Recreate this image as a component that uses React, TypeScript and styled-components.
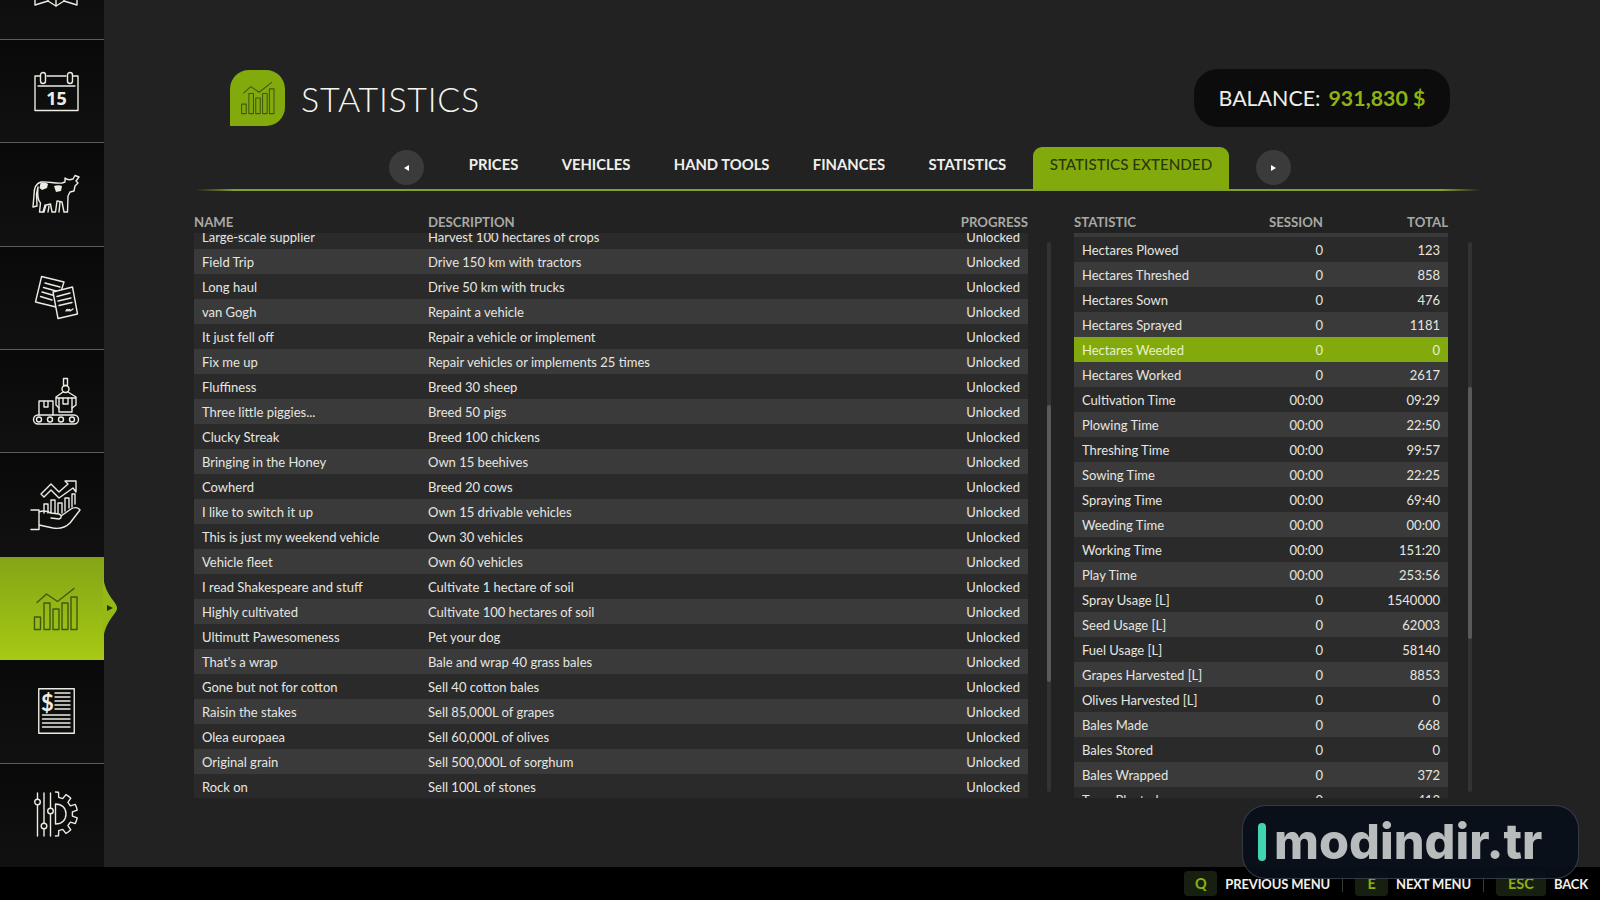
import React from 'react';
import styled, { createGlobalStyle } from 'styled-components';

const GlobalStyle = createGlobalStyle`
  html, body {
    margin: 0;
    padding: 0;
    background: #222222;
    overflow: hidden;
  }
  * {
    box-sizing: border-box;
  }
`;

const FONT = `Lato, "Noto Sans", "Liberation Sans", sans-serif`;
const GREEN = '#83aa0d';
const INK = '#ecece4';

const Page = styled.div`
  position: relative;
  width: 1600px;
  height: 900px;
  overflow: hidden;
  display: flex;
  flex-direction: column;
  background: #222222;
  font-family: ${FONT};
  color: #e6e6e0;
`;

const Body = styled.div`
  flex: 1;
  min-height: 0;
  display: flex;
`;

const Sidebar = styled.nav`
  flex: 0 0 104px;
  display: flex;
  flex-direction: column;
  justify-content: flex-end;
  background: #0d0d0d;
`;

const NavItem = styled.div<{ $active?: boolean; $plain?: boolean }>`
  position: relative;
  flex: 0 0 103.4px;
  display: flex;
  align-items: center;
  justify-content: center;
  padding-left: 8px;
  background: ${p => (p.$active ? 'linear-gradient(180deg, #84a416 0%, #a6ca14 100%)' : 'linear-gradient(180deg, #090909 0%, #111111 100%)')};
  border-bottom: ${p => (p.$active || p.$plain ? '0' : '1px solid #5c5c5c')};
`;

const Bump = styled.svg`
  position: absolute;
  left: 103px;
  top: 18px;
  width: 15px;
  height: 66px;
`;

const Main = styled.main`
  flex: 1;
  min-width: 0;
  padding-top: 69px;
  display: flex;
  flex-direction: column;
`;

const Header = styled.header`
  height: 58px;
  margin: 0 150px 0 126px;
  display: flex;
  align-items: center;
  justify-content: space-between;
`;

const TitleGroup = styled.div`
  display: flex;
  align-items: center;
  gap: 16px;
`;

const TitleBadge = styled.div`
  width: 55px;
  height: 56px;
  border-radius: 19px 19px 19px 0;
  background: ${GREEN};
  display: flex;
  align-items: center;
  justify-content: center;
`;

const Title = styled.h1`
  margin: 0;
  font-size: 34px;
  font-weight: 300;
  letter-spacing: 0.7px;
  color: #f6f6f0;
`;

const Balance = styled.div`
  width: 256px;
  height: 58px;
  border-radius: 24px;
  background: #0c0c0c;
  display: flex;
  align-items: center;
  justify-content: center;
  gap: 8px;
  font-size: 21.4px;
  color: #eeeee8;
`;

const BalanceValue = styled.span`
  font-weight: 700;
  color: #8db312;
`;

const TabBar = styled.div`
  position: relative;
  height: 44px;
  margin: 20px 120px 0 93px;
  padding-left: 3px;
  display: flex;
  justify-content: center;
  align-items: flex-start;
  border-bottom: 2px solid transparent;
  border-image: linear-gradient(90deg, #222222 0%, #84a02c 3%, #84a02c 97%, #222222 100%) 1;
`;

const RoundButton = styled.div<{ $next?: boolean }>`
  width: 35px;
  height: 35px;
  margin: 3px ${p => (p.$next ? 0 : '28px')} 0 ${p => (p.$next ? '27px' : 0)};
  border-radius: 50%;
  background: #3b3b3b;
  display: flex;
  align-items: center;
  justify-content: center;
  &::before {
    content: '';
    border-style: solid;
    border-width: 3px 0 3px 5px;
    border-color: transparent transparent transparent #ffffff;
    transform: ${p => (p.$next ? 'none' : 'rotate(180deg)')};
  }
`;

const Tab = styled.div<{ $active?: boolean }>`
  height: 42px;
  padding: 7px 17px 0;
  margin-right: ${p => (p.$active ? 0 : '9.4px')};
  border-radius: 9px 9px 0 0;
  background: ${p => (p.$active ? GREEN : 'transparent')};
  color: ${p => (p.$active ? '#2a380b' : '#f0f0ea')};
  font-size: ${p => (p.$active ? 15.2 : 14.8)}px;
  line-height: 20px;
  font-weight: ${p => (p.$active ? 500 : 700)};
  white-space: nowrap;
`;

const Tables = styled.div`
  margin: 22px 0 0 90px;
  display: flex;
  align-items: flex-start;
`;

const TableColumn = styled.section<{ $width: number; $gapLeft?: number }>`
  flex: 0 0 ${p => p.$width}px;
  margin-left: ${p => p.$gapLeft ?? 0}px;
`;

const HeadRow = styled.div<{ $stats?: boolean }>`
  height: 20px;
  padding-bottom: 3px;
  display: grid;
  grid-template-columns: ${p => (p.$stats ? '1fr 100px 125px' : '234px 1fr 120px')};
  align-items: center;
  font-size: 13.2px;
  line-height: 16px;
  font-weight: 700;
  color: #a8a8a4;
`;

const HeadCell = styled.div<{ $right?: boolean }>`
  text-align: ${p => (p.$right ? 'right' : 'left')};
`;

const ListWindow = styled.div`
  height: 565px;
  overflow: hidden;
`;

const List = styled.div<{ $offset: number }>`
  margin-top: -${p => p.$offset}px;
`;

const Row = styled.div<{ $stats?: boolean; $light?: boolean; $selected?: boolean }>`
  height: 25px;
  display: grid;
  grid-template-columns: ${p => (p.$stats ? '1fr 100px 125px' : '234px 1fr 120px')};
  align-items: center;
  padding: 0 8px 0 ${p => (p.$stats ? '8px' : '0')};
  background: ${p => (p.$selected ? GREEN : p.$light ? '#3a3a3a' : '#2a2a2a')};
  font-size: 13px;
  color: ${p => (p.$selected ? '#e9f0cf' : '#e6e6e0')};
  white-space: nowrap;
`;

const NameCell = styled.div`
  padding-left: 8px;
`;

const ValueCell = styled.div<{ $shift?: boolean }>`
  text-align: right;
  margin-right: ${p => (p.$shift ? '-8px' : 0)};
`;

const Track = styled.div<{ $gapLeft: number }>`
  flex: 0 0 4px;
  height: 550px;
  margin: 29px 0 0 ${p => p.$gapLeft}px;
  border-radius: 2px;
  background: #333333;
  display: flex;
`;

const Thumb = styled.div<{ $top: number; $height: number }>`
  width: 4px;
  height: ${p => p.$height}px;
  margin-top: ${p => p.$top}px;
  border-radius: 2px;
  background: #5a5a5a;
`;

const Footer = styled.footer`
  flex: 0 0 33px;
  background: #000000;
  display: flex;
  align-items: center;
  justify-content: flex-end;
  padding-right: 12px;
`;

const KeyCap = styled.div<{ $wide?: boolean }>`
  width: ${p => (p.$wide ? 50 : 33)}px;
  height: 25px;
  margin-right: 8px;
  border-radius: 4px;
  background: #172010;
  color: #8bb011;
  display: flex;
  align-items: center;
  justify-content: center;
  font-size: 14.5px;
  font-weight: 700;
`;

const KeyLabel = styled.span`
  font-size: 13px;
  font-weight: 700;
  letter-spacing: -0.15px;
  color: #f0f0ea;
  white-space: nowrap;
`;

const KeyDivider = styled.div`
  width: 1px;
  height: 16px;
  margin: 0 12px;
  background: #3a3a3a;
`;

const Watermark = styled.div`
  position: absolute;
  right: 21px;
  bottom: 21px;
  width: 337px;
  height: 74px;
  border-radius: 24px;
  border: 1px solid rgba(200, 220, 230, 0.22);
  background: rgba(8, 15, 25, 0.93);
  display: flex;
  align-items: center;
  padding-left: 15px;
  gap: 8px;
`;

const WatermarkBar = styled.div`
  width: 8px;
  height: 38px;
  border-radius: 4px;
  background: #40d6b2;
`;

const WatermarkText = styled.span`
  font-family: Inter, "Noto Sans", sans-serif;
  font-size: 48.5px;
  font-weight: 800;
  line-height: 1;
  color: #b9bcbd;
`;

const Icon = styled.svg`
  display: block;
  fill: none;
  stroke: currentColor;
  stroke-width: 1.4;
  stroke-linecap: round;
  stroke-linejoin: round;
  color: ${INK};
  overflow: visible;
`;

const DarkIcon = styled(Icon)`
  color: #3f5a0e;
`;

const CalendarDay = styled.text`
  font-family: "Noto Sans", sans-serif;
  font-size: 18px;
  font-weight: 700;
  fill: currentColor;
  stroke: none;
`;

const InvoiceSign = styled.text`
  font-family: ${FONT};
  font-size: 22px;
  font-weight: 700;
  fill: currentColor;
  stroke: none;
`;

const MapIcon = () => (
  <Icon width={46} height={40} viewBox="0 0 46 40">
    <path d="M2 4 L15 1 L23 5 L31 1 L44 4 V37 L31 33 L23 38 L15 33 L2 37 Z" />
    <path d="M15 1 V33 M23 5 V38 M31 1 V33" />
  </Icon>
);

const CalendarIcon = () => (
  <Icon width={45} height={39} viewBox="0 0 45 39">
    <path d="M6 4 H1 V38.5 H44 V4 H39 M13 4 H32" />
    <rect x={6.5} y={0.5} width={5} height={11} rx={2.5} />
    <rect x={33.5} y={0.5} width={5} height={11} rx={2.5} />
    <path d="M4 14 H41" />
    <CalendarDay x={22.5} y={33} textAnchor="middle">15</CalendarDay>
  </Icon>
);

const CowIcon = () => (
  <Icon width={48} height={38} viewBox="0 0 48 38">
    <path d="M33 3 C35 5 38 5 41 4 L43 0.5 L47 2 L44 6 L46 8 L43 11 L42 16 L38 17 L36 21 L35.5 37 H32 L30 27 L25 26 L23.5 37 H20 L18.5 29 L14 30 L12 37 H7.5 L8.5 28 C6 26 5.5 18 6 12 L4.5 19 L5 31 L1 32 L2 20 C2 12 5 8 9 7 C15 6 24 9 30 8 L33 7 Z" />
    <path fill="currentColor" stroke="none" d="M8.5 8 C12 7 15 8 16 9 L15 13 L10 15 L7.5 13 Z M22 11 C25 10 28 10 30 11 L29 16 L24 17 Z" />
    <path d="M11 37 L13 30 M16 37 L17 31 M27 37 L28 27" />
  </Icon>
);

const DocumentsIcon = () => (
  <Icon width={43} height={43} viewBox="0 0 43 43">
    <polygon points="6.6,0.5 29,6 21,31 0.5,26" />
    <path d="M10 7 L25 11 M8.5 11.5 L23 15.5 M7 16 L19 19.5 M5.5 20.5 L17 24" />
    <polygon points="18,16 37.5,11 42.5,38 23,42.5" fill="#0e0e0e" />
    <path d="M22 20.5 L35 17 M23 25 L36 22 M24 29.5 L37 26.5 M31 35 C32 33 33 33 33 35 C34 33 35 33 35 35 L38 33" />
  </Icon>
);

const FactoryIcon = () => (
  <Icon width={46} height={46} viewBox="0 0 46 46">
    <rect x={0.5} y={37} width={45} height={9} rx={4.5} />
    <circle cx={6} cy={41.5} r={2.5} />
    <circle cx={17} cy={41.5} r={2.5} />
    <circle cx={28} cy={41.5} r={2.5} />
    <circle cx={39} cy={41.5} r={2.5} />
    <path d="M6 37 V23 H20 V37 M11 23 V29 H15 V23" />
    <rect x={30.5} y={0.5} width={4} height={7} />
    <circle cx={32.5} cy={11} r={3.5} />
    <path d="M30 14 L23 19 V27 L26 30 M35 14 L43 19 V27 L39 30 M23 20 H43" />
    <path d="M26 20 V34 H39 V20 M30 20 V26 H35 V20" />
  </Icon>
);

const HandIcon = () => (
  <Icon width={50} height={50} viewBox="0 0 50 50">
    <path d="M10 14 L20 4 L28 12 L37 4 L34 1 H45 V12 L42 8 L28 18 L20 10 L13 17 Z" />
    <path d="M13 33 V24 H17 V33 M20 33 V20 H24 V33 M27 33 V23 H31 V33 M34 31 V18 H38 V28 M41 27 V14 H44 V24" />
    <path d="M0 30 H8 V49.5 H0 M8 32 C12 30 16 31 20 33 L28 34 C31 35 31 38 28 39 L20 38 M30 36 L40 29 C43 27 47 27 49 30 L39 43 C34 48 28 49 22 48 L8 45" />
  </Icon>
);

const BarsIcon = ({ width, height }: { width: number; height: number }) => (
  <DarkIcon width={width} height={height} viewBox="0 0 44 42">
    <rect x={0.5} y={29} width={6} height={12.5} />
    <rect x={10} y={15} width={6} height={26.5} />
    <rect x={19} y={21} width={6} height={20.5} />
    <rect x={28} y={15} width={6} height={26.5} />
    <rect x={37} y={9} width={6} height={32.5} />
    <path d="M3 14.5 L12.5 6 L23.5 13.5 L40 0.5" />
  </DarkIcon>
);

const InvoiceIcon = () => (
  <Icon width={37} height={46} viewBox="0 0 37 46">
    <rect x={0.75} y={0.75} width={35.5} height={44.5} />
    <InvoiceSign x={3} y={23}>$</InvoiceSign>
    <path d="M17 5 H32 M17 9 H32 M17 13 H32 M17 17 H32 M17 21 H32 M4.5 27 H32 M4.5 31 H32 M4.5 35 H32 M4.5 39 H32" />
  </Icon>
);

// half a cog, teeth on the right side only
const halfGear = () => {
  const cx = 21.5;
  const cy = 22;
  const outer = 22;
  const inner = 17;
  const teeth = 5;
  const points: string[] = [`M${cx} ${cy - outer}`];
  for (let i = 0; i < teeth; i++) {
    const step = 180 / teeth;
    const start = -90 + i * step;
    const angles: [number, number][] = [
      [start + step * 0.22, outer],
      [start + step * 0.3, inner],
      [start + step * 0.7, inner],
      [start + step * 0.78, outer],
    ];
    const seq: [number, number][] = i === 0 ? angles : [[start + step * 0.02, outer], ...angles];
    seq.forEach(([a, r]) => {
      const rad = (a * Math.PI) / 180;
      points.push(`L${(cx + r * Math.cos(rad)).toFixed(1)} ${(cy + r * Math.sin(rad)).toFixed(1)}`);
    });
  }
  points.push(`L${cx} ${cy + outer}`);
  return points.join(' ');
};

const SlidersIcon = () => (
  <Icon width={44} height={46} viewBox="0 0 44 46">
    <path d="M3.5 1 V7 M3.5 13 V44 M10 1 V31 M10 37 V44 M16.5 1 V16 M16.5 22 V44" />
    <circle cx={3.5} cy={10} r={2.8} />
    <circle cx={10} cy={34} r={2.8} />
    <circle cx={16.5} cy={19} r={2.8} />
    <path d={halfGear()} />
    <path d="M21.5 12 C28 12 32 16 32 22 C32 28 28 32 21.5 32 Z" />
  </Icon>
);

const achievements: [string, string][] = [
  ['Large-scale supplier', 'Harvest 100 hectares of crops'],
  ['Field Trip', 'Drive 150 km with tractors'],
  ['Long haul', 'Drive 50 km with trucks'],
  ['van Gogh', 'Repaint a vehicle'],
  ['It just fell off', 'Repair a vehicle or implement'],
  ['Fix me up', 'Repair vehicles or implements 25 times'],
  ['Fluffiness', 'Breed 30 sheep'],
  ['Three little piggies...', 'Breed 50 pigs'],
  ['Clucky Streak', 'Breed 100 chickens'],
  ['Bringing in the Honey', 'Own 15 beehives'],
  ['Cowherd', 'Breed 20 cows'],
  ['I like to switch it up', 'Own 15 drivable vehicles'],
  ['This is just my weekend vehicle', 'Own 30 vehicles'],
  ['Vehicle fleet', 'Own 60 vehicles'],
  ['I read Shakespeare and stuff', 'Cultivate 1 hectare of soil'],
  ['Highly cultivated', 'Cultivate 100 hectares of soil'],
  ['Ultimutt Pawesomeness', 'Pet your dog'],
  ["That's a wrap", 'Bale and wrap 40 grass bales'],
  ['Gone but not for cotton', 'Sell 40 cotton bales'],
  ['Raisin the stakes', 'Sell 85,000L of grapes'],
  ['Olea europaea', 'Sell 60,000L of olives'],
  ['Original grain', 'Sell 500,000L of sorghum'],
  ['Rock on', 'Sell 100L of stones'],
];

// first row is the one scrolled out above the list, only its bottom edge shows
const stats: [string, string, string][] = [
  ['', '', ''],
  ['Hectares Plowed', '0', '123'],
  ['Hectares Threshed', '0', '858'],
  ['Hectares Sown', '0', '476'],
  ['Hectares Sprayed', '0', '1181'],
  ['Hectares Weeded', '0', '0'],
  ['Hectares Worked', '0', '2617'],
  ['Cultivation Time', '00:00', '09:29'],
  ['Plowing Time', '00:00', '22:50'],
  ['Threshing Time', '00:00', '99:57'],
  ['Sowing Time', '00:00', '22:25'],
  ['Spraying Time', '00:00', '69:40'],
  ['Weeding Time', '00:00', '00:00'],
  ['Working Time', '00:00', '151:20'],
  ['Play Time', '00:00', '253:56'],
  ['Spray Usage [L]', '0', '1540000'],
  ['Seed Usage [L]', '0', '62003'],
  ['Fuel Usage [L]', '0', '58140'],
  ['Grapes Harvested [L]', '0', '8853'],
  ['Olives Harvested [L]', '0', '0'],
  ['Bales Made', '0', '668'],
  ['Bales Stored', '0', '0'],
  ['Bales Wrapped', '0', '372'],
  ['Trees Planted', '0', '413'],
];

const tabs = ['PRICES', 'VEHICLES', 'HAND TOOLS', 'FINANCES', 'STATISTICS'];

const App: React.FC = () => (
  <Page>
    <GlobalStyle />
    <Body>
      <Sidebar>
        <NavItem><MapIcon /></NavItem>
        <NavItem><CalendarIcon /></NavItem>
        <NavItem><CowIcon /></NavItem>
        <NavItem><DocumentsIcon /></NavItem>
        <NavItem><FactoryIcon /></NavItem>
        <NavItem $plain><HandIcon /></NavItem>
        <NavItem $active>
          <BarsIcon width={44} height={42} />
          <Bump viewBox="0 0 15 66">
            <path d="M0 0 C1 12 5 18 9 24 C13 29 14 31 14 33 C14 35 13 37 9 42 C5 48 1 54 0 66 Z" fill="#96ba15" />
            <path d="M4 30 L10 33 L4 36 Z" fill="#27320a" />
          </Bump>
        </NavItem>
        <NavItem><InvoiceIcon /></NavItem>
        <NavItem $plain><SlidersIcon /></NavItem>
      </Sidebar>
      <Main>
        <Header>
          <TitleGroup>
            <TitleBadge><BarsIcon width={34} height={32} /></TitleBadge>
            <Title>STATISTICS</Title>
          </TitleGroup>
          <Balance>
            <span>BALANCE:</span>
            <BalanceValue>931,830 $</BalanceValue>
          </Balance>
        </Header>
        <TabBar>
          <RoundButton />
          {tabs.map(tab => <Tab key={tab}>{tab}</Tab>)}
          <Tab $active>STATISTICS EXTENDED</Tab>
          <RoundButton $next />
        </TabBar>
        <Tables>
          <TableColumn $width={834}>
            <HeadRow>
              <HeadCell>NAME</HeadCell>
              <HeadCell>DESCRIPTION</HeadCell>
              <HeadCell $right>PROGRESS</HeadCell>
            </HeadRow>
            <ListWindow>
              <List $offset={9}>
                {achievements.map(([name, description], i) => (
                  <Row key={name} $light={i % 2 === 1}>
                    <NameCell>{name}</NameCell>
                    <div>{description}</div>
                    <ValueCell>Unlocked</ValueCell>
                  </Row>
                ))}
              </List>
            </ListWindow>
          </TableColumn>
          <Track $gapLeft={19}><Thumb $top={163} $height={277} /></Track>
          <TableColumn $width={374} $gapLeft={23}>
            <HeadRow $stats>
              <HeadCell>STATISTIC</HeadCell>
              <HeadCell $right>SESSION</HeadCell>
              <HeadCell $right>TOTAL</HeadCell>
            </HeadRow>
            <ListWindow>
              <List $offset={21}>
                {stats.map(([name, session, total], i) => (
                  <Row key={i} $stats $light={i % 2 === 0} $selected={name === 'Hectares Weeded'}>
                    <div>{name}</div>
                    <ValueCell $shift>{session}</ValueCell>
                    <ValueCell>{total}</ValueCell>
                  </Row>
                ))}
              </List>
            </ListWindow>
          </TableColumn>
          <Track $gapLeft={20}><Thumb $top={145} $height={252} /></Track>
        </Tables>
      </Main>
    </Body>
    <Footer>
      <KeyCap>Q</KeyCap>
      <KeyLabel>PREVIOUS MENU</KeyLabel>
      <KeyDivider />
      <KeyCap>E</KeyCap>
      <KeyLabel>NEXT MENU</KeyLabel>
      <KeyDivider />
      <KeyCap $wide>ESC</KeyCap>
      <KeyLabel>BACK</KeyLabel>
    </Footer>
    <Watermark>
      <WatermarkBar />
      <WatermarkText>modindir.tr</WatermarkText>
    </Watermark>
  </Page>
);

export default App;
